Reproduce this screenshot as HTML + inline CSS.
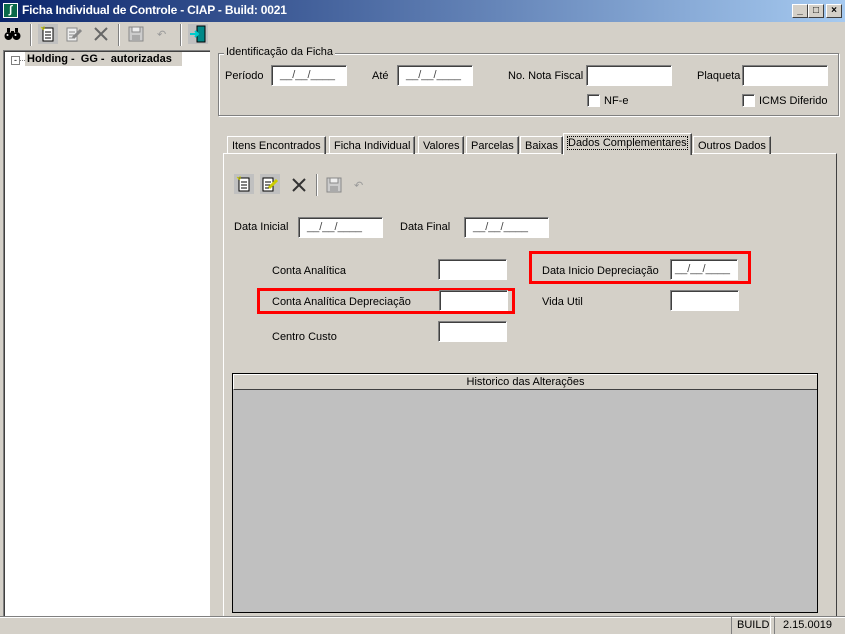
<!DOCTYPE html>
<html><head><meta charset="utf-8"><style>
*{box-sizing:border-box;margin:0;padding:0}
body{width:845px;height:634px;background:#d4d0c8;font-family:"Liberation Sans",sans-serif;font-size:11px;color:#000;position:relative;overflow:hidden}
.a{position:absolute}
.in{position:absolute;background:#fff;border-top:1px solid #808080;border-left:1px solid #808080;border-right:1px solid #fff;border-bottom:1px solid #fff;box-shadow:inset 1px 1px 0 #404040;font-size:11px;color:#444;padding:3px 0 0 8px;letter-spacing:0px}
.lb{position:absolute;white-space:nowrap}
.red{position:absolute;border:3px solid #f00}
.tab{position:absolute;top:136px;height:18px;border-top:1px solid #fff;border-left:1px solid #fff;border-right:1px solid #404040;padding:3px 4px 0 4px;white-space:nowrap;box-shadow:inset -1px 0 0 #808080}
.btn{position:absolute;top:4px;width:16px;height:14px;background:#d4d0c8;border-top:1px solid #fff;border-left:1px solid #fff;border-right:1px solid #404040;border-bottom:1px solid #404040;font-size:10px;font-weight:bold;text-align:center;line-height:11px}
.sep{position:absolute;width:2px;border-left:1px solid #808080;border-right:1px solid #fff}
.cb{position:absolute;width:13px;height:13px;background:#fff;border-top:1px solid #808080;border-left:1px solid #808080;border-right:1px solid #fff;border-bottom:1px solid #fff;box-shadow:inset 1px 1px 0 #404040}
</style></head><body>
<div class="a" style="left:0;top:0;width:845px;height:22px;background:linear-gradient(to right,#0a246a,#a6caf0)"></div>
<div class="a" style="left:3px;top:3px;width:15px;height:15px;background:#0a6a4a;border:1px solid #fff;color:#fff;font-size:11px;font-weight:bold;text-align:center;line-height:13px">∫</div>
<div class="a" style="left:22px;top:3px;color:#fff;font-weight:bold;font-size:12px;letter-spacing:-0.2px">Ficha Individual de Controle - CIAP - Build: 0021</div>
<div class="btn" style="left:792px">_</div>
<div class="btn" style="left:808px">□</div>
<div class="btn" style="left:826px">×</div>

<!-- toolbar -->
<svg class="a" style="left:4px;top:27px" width="18" height="14"><path d="M3 1h3v4H3zM11 1h3v4h-3z" fill="#000"/><circle cx="4.5" cy="9" r="4" fill="#000"/><circle cx="12.5" cy="9" r="4" fill="#000"/><rect x="7" y="4" width="3" height="5" fill="#000"/><circle cx="3.5" cy="8" r="1" fill="#fff"/><circle cx="11.5" cy="8" r="1" fill="#fff"/></svg>
<div class="sep" style="left:30px;top:24px;height:22px"></div>
<div class="a" style="left:38px;top:24px;width:20px;height:20px;background:#c0c0c0"></div>
<svg class="a" style="left:40px;top:26px" width="16" height="16"><rect x="3" y="2" width="10" height="13" fill="#fff" stroke="#000"/><path d="M5 6h6M5 9h6M5 12h6" stroke="#000"/><path d="M1 1l3 3M4 0v3" stroke="#cc0"/></svg>
<svg class="a" style="left:65px;top:26px" width="18" height="16"><rect x="2" y="2" width="10" height="13" fill="#eee" stroke="#888"/><path d="M4 6h6M4 9h6M4 12h4" stroke="#888"/><path d="M8 12l8-8" stroke="#888" stroke-width="3"/></svg>
<svg class="a" style="left:93px;top:27px" width="16" height="14"><path d="M2 1l12 12M14 1L2 13" stroke="#666" stroke-width="2"/></svg>
<div class="sep" style="left:118px;top:24px;height:22px"></div>
<svg class="a" style="left:128px;top:26px" width="16" height="16"><rect x="1" y="1" width="14" height="14" fill="#ccc" stroke="#888"/><rect x="4" y="1" width="8" height="5" fill="#eee" stroke="#888"/><rect x="4" y="9" width="8" height="6" fill="#aaa"/></svg>
<div class="a" style="left:157px;top:28px;color:#999;font-size:11px">↶</div>
<div class="sep" style="left:180px;top:24px;height:22px"></div>
<div class="a" style="left:188px;top:24px;width:20px;height:20px;background:#c0c0c0"></div>
<svg class="a" style="left:189px;top:25px" width="18" height="18"><rect x="8" y="1" width="8" height="16" fill="#088" stroke="#000"/><path d="M1 9h8M6 6l3 3-3 3" stroke="#0cc" stroke-width="2" fill="none"/></svg>

<!-- tree -->
<div class="a" style="left:3px;top:50px;width:207px;height:568px;background:#fff;border-top:1px solid #808080;border-left:1px solid #808080;box-shadow:inset 1px 1px 0 #404040"></div>
<div class="a" style="left:11px;top:56px;width:9px;height:9px;border:1px solid #808080;background:#fff;font-size:9px;line-height:6px;text-align:center">-</div>
<div class="a" style="left:20px;top:60px;width:5px;border-top:1px dotted #808080"></div>
<div class="a" style="left:25px;top:52px;background:#d4d0c8;font-weight:bold;padding:1px 2px;width:157px;white-space:nowrap">Holding -&nbsp; GG -&nbsp; autorizadas</div>

<!-- group -->
<div class="a" style="left:218px;top:53px;width:621px;height:63px;border:1px solid #808080;box-shadow:1px 1px 0 #fff,inset 1px 1px 0 #fff"></div>
<div class="lb" style="left:224px;top:46px;background:#d4d0c8;padding:0 2px">Identificação da Ficha</div>
<div class="lb" style="left:225px;top:70px">Período</div>
<div class="in" style="left:271px;top:65px;width:76px;height:21px">__/__/____</div>
<div class="lb" style="left:372px;top:70px">Até</div>
<div class="in" style="left:397px;top:65px;width:76px;height:21px">__/__/____</div>
<div class="lb" style="left:508px;top:70px">No. Nota Fiscal</div>
<div class="in" style="left:586px;top:65px;width:86px;height:21px"></div>
<div class="lb" style="left:697px;top:70px">Plaqueta</div>
<div class="in" style="left:742px;top:65px;width:86px;height:21px"></div>
<div class="cb" style="left:587px;top:94px"></div><div class="lb" style="left:604px;top:95px">NF-e</div>
<div class="cb" style="left:742px;top:94px"></div><div class="lb" style="left:759px;top:95px">ICMS Diferido</div>

<!-- tab panel -->
<div class="a" style="left:223px;top:153px;width:614px;height:465px;border-top:1px solid #fff;border-left:1px solid #fff;border-right:1px solid #404040;border-bottom:1px solid #404040"></div>
<div class="tab" style="left:227px">Itens Encontrados</div>
<div class="tab" style="left:329px">Ficha Individual</div>
<div class="tab" style="left:418px">Valores</div>
<div class="tab" style="left:466px">Parcelas</div>
<div class="tab" style="left:520px">Baixas</div>
<div class="tab" style="left:563px;top:133px;height:22px;background:#d4d0c8;border-bottom:none"><span style="outline:1px dotted #000">Dados Complementares</span></div>
<div class="tab" style="left:693px">Outros Dados</div>

<div class="a" style="left:234px;top:174px;width:20px;height:20px;background:#c0c0c0"></div>
<svg class="a" style="left:236px;top:176px" width="16" height="16"><rect x="3" y="2" width="10" height="13" fill="#fff" stroke="#000"/><path d="M5 6h6M5 9h6M5 12h6" stroke="#000"/><path d="M1 1l3 3M4 0v3" stroke="#cc0"/></svg>
<div class="a" style="left:260px;top:174px;width:20px;height:20px;background:#c0c0c0"></div>
<svg class="a" style="left:261px;top:176px" width="18" height="16"><rect x="2" y="2" width="10" height="13" fill="#fff" stroke="#000"/><path d="M4 6h6M4 9h6M4 12h4" stroke="#000"/><path d="M8 12l8-8" stroke="#cc0" stroke-width="3"/></svg>
<svg class="a" style="left:291px;top:178px" width="16" height="14"><path d="M2 1l12 12M14 1L2 13" stroke="#333" stroke-width="2"/></svg>
<div class="sep" style="left:316px;top:174px;height:22px"></div>
<svg class="a" style="left:326px;top:177px" width="16" height="16"><rect x="1" y="1" width="14" height="14" fill="#ccc" stroke="#888"/><rect x="4" y="1" width="8" height="5" fill="#eee" stroke="#888"/><rect x="4" y="9" width="8" height="6" fill="#aaa"/></svg>
<div class="a" style="left:354px;top:179px;color:#999">↶</div>

<div class="lb" style="left:234px;top:221px">Data Inicial</div>
<div class="in" style="left:298px;top:217px;width:85px;height:21px">__/__/____</div>
<div class="lb" style="left:400px;top:221px">Data Final</div>
<div class="in" style="left:464px;top:217px;width:85px;height:21px">__/__/____</div>

<div class="lb" style="left:272px;top:265px">Conta Analítica</div>
<div class="in" style="left:438px;top:259px;width:69px;height:21px"></div>
<div class="red" style="left:529px;top:251px;width:222px;height:33px"></div>
<div class="lb" style="left:542px;top:265px">Data Inicio Depreciação</div>
<div class="in" style="left:670px;top:259px;width:68px;height:21px;padding-left:4px">__/__/____</div>

<div class="red" style="left:257px;top:288px;width:258px;height:26px"></div>
<div class="lb" style="left:272px;top:296px">Conta Analítica Depreciação</div>
<div class="in" style="left:439px;top:290px;width:69px;height:21px"></div>
<div class="lb" style="left:542px;top:296px">Vida Util</div>
<div class="in" style="left:670px;top:290px;width:69px;height:21px"></div>

<div class="lb" style="left:272px;top:331px">Centro Custo</div>
<div class="in" style="left:438px;top:321px;width:69px;height:21px"></div>

<div class="a" style="left:232px;top:373px;width:586px;height:240px;border:1px solid #000;background:#c0c0c0"></div>
<div class="a" style="left:233px;top:374px;width:584px;height:16px;background:#d4d0c8;border-top:1px solid #fff;border-left:1px solid #fff;border-bottom:1px solid #404040;text-align:center;line-height:14px">Historico das Alterações</div>

<!-- status -->
<div class="a" style="left:0;top:616px;width:845px;height:1px;background:#808080"></div>
<div class="a" style="left:0;top:617px;width:845px;height:1px;background:#fff"></div>
<div class="a" style="left:731px;top:616px;width:40px;height:18px;border-left:1px solid #808080;border-top:1px solid #808080;border-right:1px solid #fff;padding:2px 0 0 5px">BUILD</div>
<div class="a" style="left:774px;top:616px;width:71px;height:18px;border-left:1px solid #808080;border-top:1px solid #808080;padding:2px 0 0 8px">2.15.0019</div>
</body></html>
